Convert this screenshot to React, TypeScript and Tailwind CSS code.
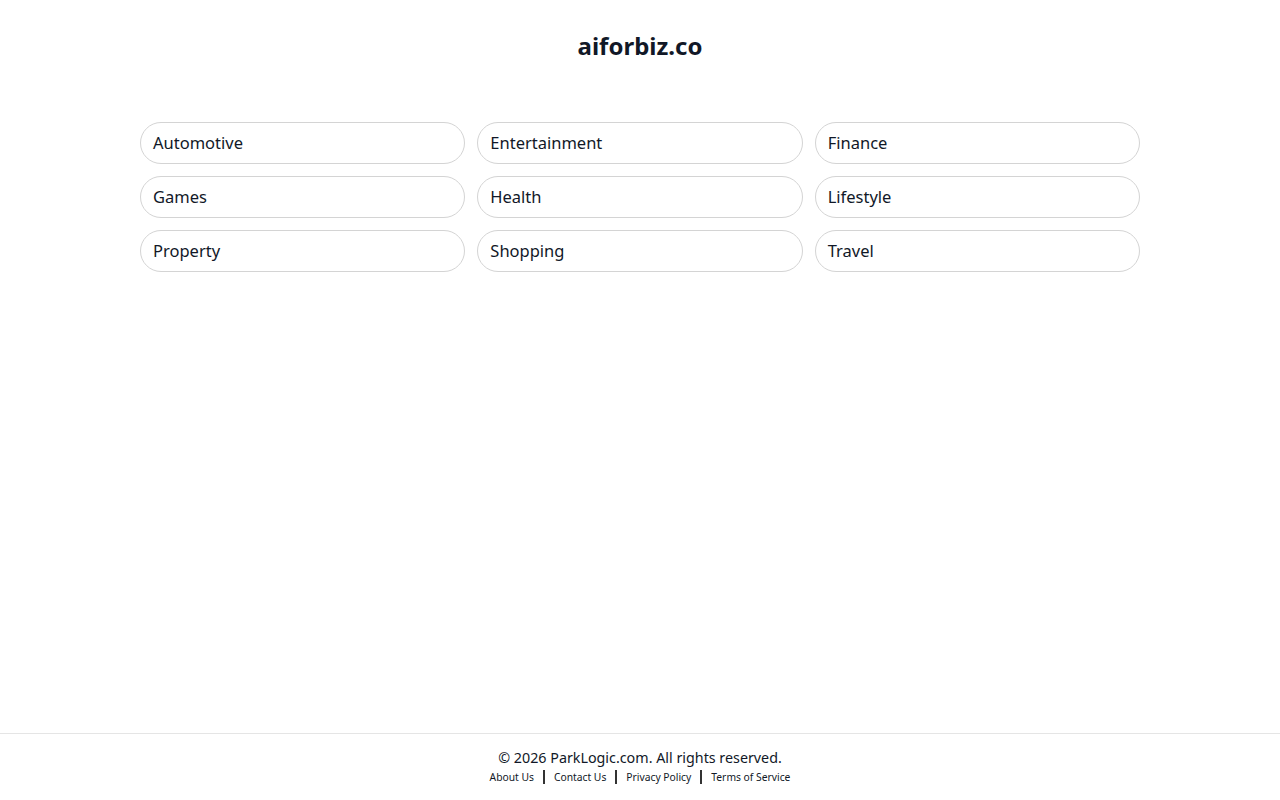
const categories = [
  "Automotive",
  "Entertainment",
  "Finance",
  "Games",
  "Health",
  "Lifestyle",
  "Property",
  "Shopping",
  "Travel",
];

const links = ["About Us", "Contact Us", "Privacy Policy", "Terms of Service"];

export default function App() {
  return (
    <div className="min-h-screen flex flex-col bg-white text-[#111827] font-['Noto_Sans',sans-serif]">
      <main className="flex-1 flex flex-col items-center">
        <h1 className="mt-[28px] text-[24px] leading-[36px] font-bold">aiforbiz.co</h1>
        <div className="mt-[58px] w-[1000px] grid grid-cols-3 gap-x-[12px] gap-y-[12px]">
          {categories.map((c) => (
            <a
              key={c}
              href="#"
              className="h-[42px] flex items-center px-[12px] rounded-full border border-[#d4d4d4] text-[16.5px] text-[#111827] hover:bg-gray-50"
            >
              {c}
            </a>
          ))}
        </div>
      </main>
      <footer className="border-t border-[#e5e5e5] h-[67px] flex flex-col items-center pt-[14px]">
        <p className="text-[14.3px] leading-[20px] text-[#111827]">© 2026 ParkLogic.com. All rights reserved.</p>
        <div className="flex items-center text-[10.3px] leading-[16px] mt-[1px]">
          {links.map((l, i) => (
            <div key={l} className="flex items-center">
              {i > 0 && <span className="mx-[9px] h-[14px] w-[2px] bg-[#333]" />}
              <a href="#">{l}</a>
            </div>
          ))}
        </div>
      </footer>
    </div>
  );
}
